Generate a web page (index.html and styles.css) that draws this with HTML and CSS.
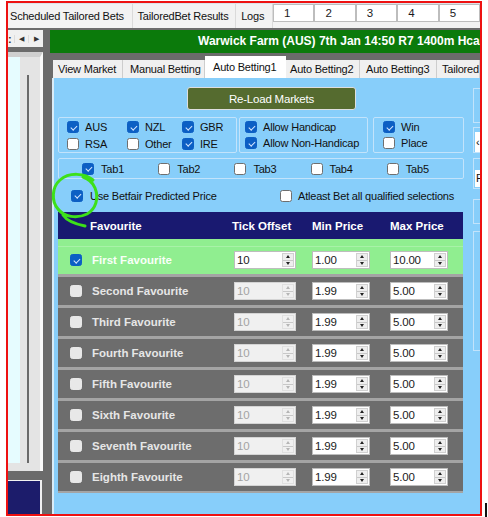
FILE: index.html
```html
<!DOCTYPE html>
<html lang="en">
<head>
    <meta charset="UTF-8">
    <title>Tailored Bets - Auto Betting1</title>
    <link rel="stylesheet" href="styles.css">
</head>
<body>
    <div class="shot">
        <div class="top-tabs">
            <div class="ttab w1">Scheduled Tailored Bets</div>
            <div class="ttab w2">TailoredBet Results</div>
            <div class="ttab w3">Logs</div>
            <div class="ttab num">1</div>
            <div class="ttab num">2</div>
            <div class="ttab num">3</div>
            <div class="ttab num">4</div>
            <div class="ttab num">5</div>
        </div>
        <div class="main">
            <div class="side-left">
                <div class="scroll-btns">
                    <span class="cut">:</span>
                    <span class="arr">&#9664;</span>
                    <span class="arr">&#9654;</span>
                </div>
                <div class="list-panel">
                    <div class="cyan"></div>
                    <div class="track"><div class="bar"></div></div>
                </div>
                <div class="navy-box"></div>
            </div>
            <div class="work">
                <div class="race-banner">Warwick Farm (AUS) 7th Jan 14:50 R7 1400m Hcap</div>
                <div class="tabs">
                    <div class="tab t1">View Market</div>
                    <div class="tab t2">Manual Betting</div>
                    <div class="tab t3 active">Auto Betting1</div>
                    <div class="tab t4">Auto Betting2</div>
                    <div class="tab t5">Auto Betting3</div>
                    <div class="tab t6">Tailored</div>
                </div>
                <div class="page">
                    <div class="content">
                        <button class="reload">Re-Load Markets</button>
                        <div class="groups">
                            <div class="group countries">
                                <label class="chk"><span class="cb on"></span>AUS</label>
                                <label class="chk"><span class="cb on"></span>NZL</label>
                                <label class="chk"><span class="cb on"></span>GBR</label>
                                <label class="chk"><span class="cb"></span>RSA</label>
                                <label class="chk"><span class="cb"></span>Other</label>
                                <label class="chk"><span class="cb on"></span>IRE</label>
                            </div>
                            <div class="group handicap">
                                <label class="chk"><span class="cb on"></span>Allow Handicap</label>
                                <label class="chk"><span class="cb on"></span>Allow Non-Handicap</label>
                            </div>
                            <div class="group types">
                                <label class="chk"><span class="cb on"></span>Win</label>
                                <label class="chk"><span class="cb"></span>Place</label>
                            </div>
                        </div>
                        <div class="group tab-picks">
                            <label class="chk"><span class="cb on"></span>Tab1</label>
                            <label class="chk"><span class="cb"></span>Tab2</label>
                            <label class="chk"><span class="cb"></span>Tab3</label>
                            <label class="chk"><span class="cb"></span>Tab4</label>
                            <label class="chk"><span class="cb"></span>Tab5</label>
                        </div>
                        <div class="options">
                            <label class="chk predicted"><span class="cb on"></span>Use Betfair Predicted Price</label>
                            <label class="chk"><span class="cb"></span>Atleast Bet all qualified selections</label>
                        </div>
                        <div class="fav-table" id="favTable">
                            <div class="fav-head">
                                <div class="c-name">Favourite</div>
                                <div class="c-tick">Tick Offset</div>
                                <div>Min Price</div>
                                <div>Max Price</div>
                            </div>
                        </div>
                    </div>
                    <div class="side-right">
                        <div class="sbox a"></div>
                        <div class="sbox b"><div class="sinput">&lsaquo;</div></div>
                        <div class="sbox c"><div class="sinput">F</div></div>
                        <div class="sbox d"></div>
                        <div class="sbox e"></div>
                    </div>
                </div>
            </div>
        </div>
    </div>
    <div class="caret"></div>

    <svg class="scribble" width="56" height="62" viewBox="0 0 56 62">
        <path d="M44 9 C36 2, 20 1, 11 9 C3 16, 2 30, 9 38 C15 46, 28 48, 38 43 C47 38, 50 27, 46 17 C44 12, 40 8, 34 6" />
        <path d="M14 44 C18 50, 26 53, 36 55" />
    </svg>

    <script>
        const favourites = [
            { name: 'First Favourite', on: true, tick: '10', min: '1.00', max: '10.00' },
            { name: 'Second Favourite', tick: '10', min: '1.99', max: '5.00' },
            { name: 'Third Favourite', tick: '10', min: '1.99', max: '5.00' },
            { name: 'Fourth Favourite', tick: '10', min: '1.99', max: '5.00' },
            { name: 'Fifth Favourite', tick: '10', min: '1.99', max: '5.00' },
            { name: 'Sixth Favourite', tick: '10', min: '1.99', max: '5.00' },
            { name: 'Seventh Favourite', tick: '10', min: '1.99', max: '5.00' },
            { name: 'Eighth Favourite', tick: '10', min: '1.99', max: '5.00' }
        ];

        function spin(value, cls) {
            return `<div class="num ${cls}"><span class="val">${value}</span>
                <span class="spin"><span class="up"></span><span class="down"></span></span></div>`;
        }

        const table = document.getElementById('favTable');
        favourites.forEach(f => {
            const row = document.createElement('div');
            row.className = 'fav-row' + (f.on ? ' first' : '');
            row.innerHTML = `
                <div class="c-name"><span class="cb ${f.on ? 'on' : 'row-off'}"></span>${f.name}</div>
                <div>${spin(f.tick, f.on ? 'wide' : 'wide off')}</div>
                <div>${spin(f.min, '')}</div>
                <div>${spin(f.max, '')}</div>
            `;
            table.appendChild(row);
        });
    </script>
</body>
</html>
```

FILE: styles.css
```css
body { margin: 0; height: 517px; overflow: hidden; background: #fff; display: flex; align-items: flex-end; font-family: 'Liberation Sans', Arial, sans-serif; font-size: 11px; letter-spacing: -0.2px; color: #111; }
.shot { align-self: flex-start; margin: 1px 0 0 6px; width: 472px; height: 511px; border: 2px solid #ee1111; overflow: hidden; display: flex; flex-direction: column; }
.caret { width: 2px; height: 14px; margin-left: 3px; background: #111; }

/* top tab strip */
.top-tabs { display: flex; height: 25px; flex: none; background: #f2f2f2; border-top: 1px solid #dde3ea; box-sizing: border-box; }
.ttab { line-height: 24px; border-right: 1px solid #dadada; box-sizing: border-box; padding-left: 5px; white-space: nowrap; }
.ttab.w1 { width: 125px; padding-left: 2px; }
.ttab.w2 { width: 104px; }
.ttab.w3 { width: 37px; }
.ttab.num { width: 41.5px; padding-left: 10px; }

.main { flex: 1; display: flex; background: #6b6b6b; }

/* left list column */
.side-left { width: 35px; display: flex; flex-direction: column; }
.scroll-btns { margin-top: 2px; height: 17px; background: #f0f0f0; display: flex; align-items: center; font-size: 7px; color: #333; }
.scroll-btns .cut { width: 6px; font-size: 11px; font-weight: bold; }
.scroll-btns .arr { width: 15px; text-align: center; border-left: 1px solid #dcdcdc; }
.list-panel { margin-top: 5px; height: 406px; display: flex; background: #e4e4e4; border-top: 5px solid #cfcfcf; border-right: 3px solid #fafafa; padding-bottom: 8px; }
.list-panel .cyan { width: 12px; background: #e6fcff; }
.list-panel .track { flex: 1; padding: 18px 0 0 7px; }
.list-panel .bar { width: 2px; height: 100%; background: #6a6a6a; }
.navy-box { margin-top: 9px; flex: 1; width: 32px; background: #1c1c6b; border-top: 1px solid #f2f2f2; border-right: 2px solid #f0f0f0; }

/* right work area */
.work { margin-left: 7px; width: 430px; display: flex; flex-direction: column; }
.race-banner { margin-top: 2px; height: 23px; line-height: 23px; background: #0b7a0b; color: #fff; font-weight: bold; font-size: 12px; letter-spacing: 0; padding-left: 148px; white-space: nowrap; overflow: hidden; }
.tabs { height: 25px; display: flex; align-items: flex-end; padding-left: 3px; }
.tab { height: 18px; line-height: 18px; background: #f0f0f0; border-right: 1px solid #cdcdcd; box-sizing: border-box; padding-left: 5px; white-space: nowrap; overflow: hidden; }
.tab.t1 { width: 70px; }
.tab.t2 { width: 82px; padding-left: 7px; }
.tab.t3 { width: 81px; padding-left: 8px; }
.tab.t4 { width: 74px; padding-left: 4px; }
.tab.t5 { width: 77px; padding-left: 6px; }
.tab.t6 { flex: 1; }
.tab.active { height: 22px; line-height: 23px; background: #fff; border-right: 0; }

.page { flex: 1; margin-left: 2px; border-left: 2px solid #d9ecf7; background: #87cefa; padding: 9px 0 0 4px; display: flex; }
.content { width: 406px; flex: none; }

.reload { display: block; margin-left: 129px; width: 169px; height: 23px; background: #556b2f; border: 1px solid #dedede; border-radius: 3px; color: #fff; font-family: inherit; font-size: 11.5px; letter-spacing: -0.2px; padding: 0; }

.groups { margin-top: 7px; height: 36px; display: flex; }
.group { border: 1px solid #c2e3fb; border-radius: 2px; box-sizing: border-box; }
.countries { width: 179px; display: grid; grid-template-columns: 60px 55px auto; padding: 1px 0 0 8px; }
.handicap { margin-left: 2px; width: 129px; padding: 1px 0 0 5px; }
.types { margin-left: 5px; width: 91px; padding: 1px 0 0 9px; }

.chk { display: flex; align-items: center; gap: 6px; height: 16px; white-space: nowrap; }
.cb { width: 12px; height: 12px; box-sizing: border-box; border: 1px solid #6f6f6f; border-radius: 2.5px; background: #fff; flex: none; position: relative; }
.cb.on { background: #0c5fc4; border-color: #0c5fc4; }
.cb.on::after { content: ''; position: absolute; left: 3.5px; top: 1.5px; width: 2.5px; height: 5px; border: solid #d6e6ff; border-width: 0 1.3px 1.3px 0; transform: rotate(45deg); }
.cb.row-off { background: #e8e8e8; border-color: #e8e8e8; }

.tab-picks { margin-top: 5px; height: 21px; display: flex; align-items: center; padding-left: 23px; }
.tab-picks .chk { width: 80px; gap: 7px; }

.options { margin-top: 9px; height: 15px; display: flex; align-items: center; padding-left: 13px; }
.options .chk.predicted { width: 209px; gap: 7px; }

/* favourites table */
.fav-table { margin-top: 9px; width: 405px; }
.fav-head, .fav-row { display: grid; grid-template-columns: 176px 78px 78px 73px; align-items: center; }
.fav-head { height: 27px; background: #191970; color: #fff; font-weight: bold; font-size: 11.5px; letter-spacing: 0; }
.fav-head .c-name { padding-left: 32px; }
.fav-head .c-tick { margin-left: -2px; }
.fav-row { height: 28px; background: #6d6d6d; color: #e6e6e6; border-top: 3px solid #a4a4a4; }
.fav-row.first { background: #90ee90; color: #f8fff8; border-top: 0; padding-top: 7px; box-shadow: inset 0 7px 0 #90ee90, inset 0 8px 0 #a8f2a8; }
.fav-row:last-child { border-bottom: 2px solid #a4a4a4; }
.fav-row .c-name { display: flex; align-items: center; gap: 10px; padding-left: 12px; font-weight: bold; font-size: 11.5px; letter-spacing: 0; }

.num { width: 58px; height: 18px; box-sizing: border-box; background: #fff; border: 1px solid #bdbdbd; display: flex; align-items: center; color: #1a1a1a; font-size: 11.5px; }
.num.wide { width: 62px; }
.num .val { padding-left: 2px; }
.num .spin { margin-left: auto; margin-right: 1px; width: 12px; height: 14px; display: flex; flex-direction: column; border: 1px solid #d0d0d0; background: #eeeeee; box-sizing: border-box; }
.spin span { flex: 1; display: flex; align-items: center; justify-content: center; }
.spin .up { border-bottom: 1px solid #c8c8c8; }
.spin .up::after { content: ''; border-left: 2.5px solid transparent; border-right: 2.5px solid transparent; border-bottom: 3px solid #222; }
.spin .down::after { content: ''; border-left: 2.5px solid transparent; border-right: 2.5px solid transparent; border-top: 3px solid #222; }
.num.off { background: #f0f0f0; border-color: #d4d4d4; color: #a3a3a3; }
.num.off .spin { background: #f0f0f0; border-color: #e0e0e0; }
.num.off .spin .up::after { border-bottom-color: #b5b5b5; }
.num.off .spin .down::after { border-top-color: #b5b5b5; }

/* partially visible right column */
.side-right { margin-left: 9px; width: 40px; flex: none; display: flex; flex-direction: column; }
.sbox { border: 1px solid #c2e3fb; box-sizing: border-box; }
.sbox.a { margin-top: 1px; height: 35px; }
.sbox.b { margin-top: 4px; height: 26px; }
.sbox.c { margin-top: 5px; height: 31px; }
.sbox.d { margin-top: 10px; height: 25px; }
.sbox.e { margin-top: 7px; height: 120px; }
.sinput { background: #fff; margin: 4px 0 0 1px; height: 20px; line-height: 20px; font-size: 11px; padding-left: 1px; }
.sbox.c .sinput { margin-top: 11px; height: 17px; line-height: 17px; }

/* green hand-drawn annotation */
.scribble { position: absolute; left: 49px; top: 171px; fill: none; stroke: #3de019; stroke-width: 3; stroke-linecap: round; }
```
